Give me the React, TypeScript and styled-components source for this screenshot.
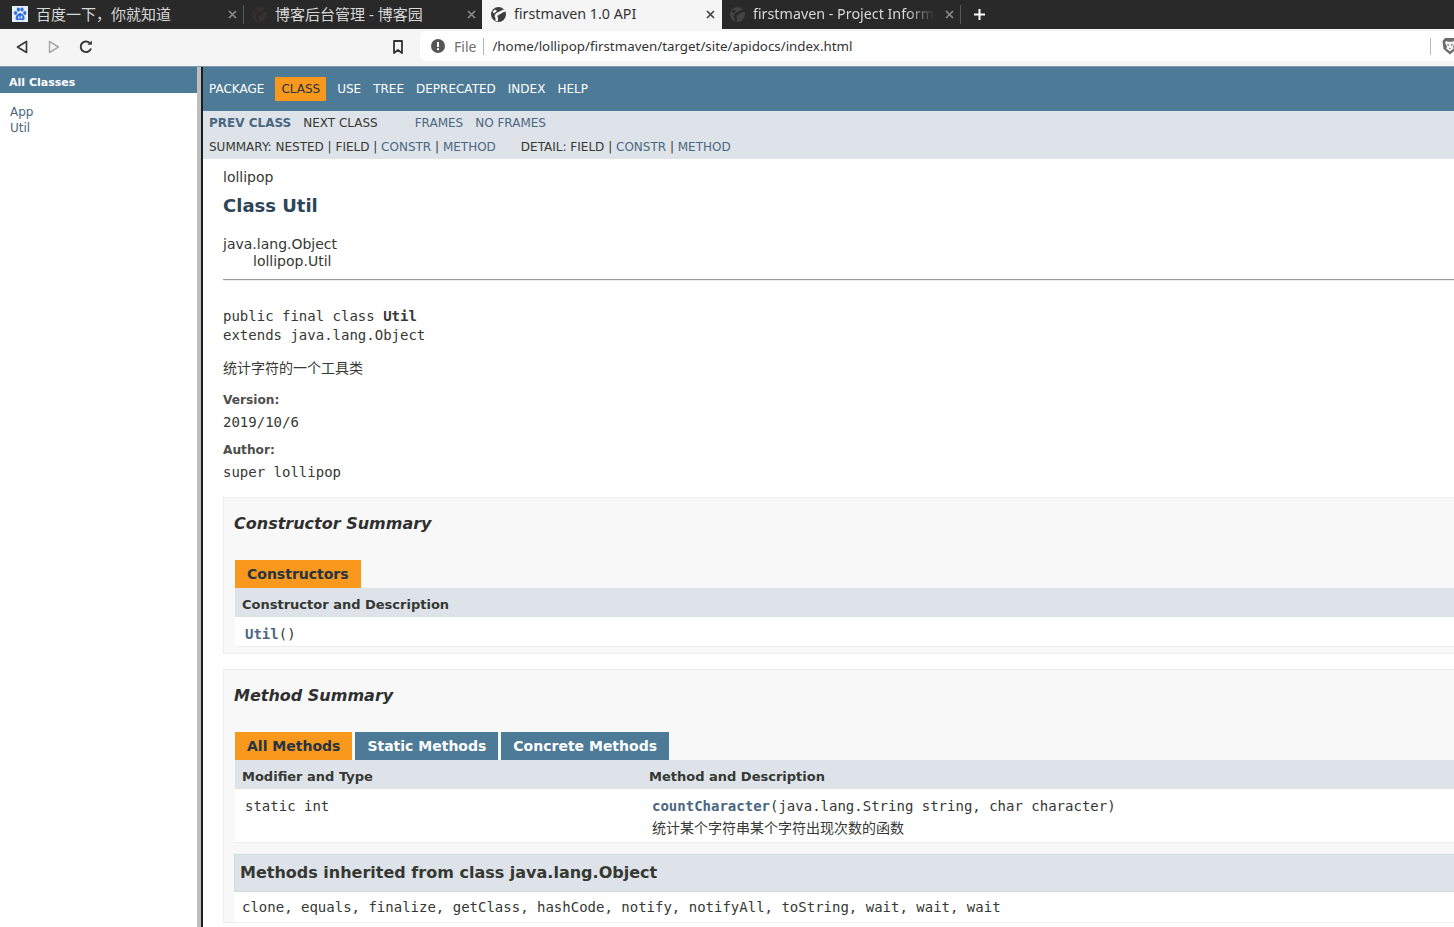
import React from 'react';
import styled, { createGlobalStyle } from 'styled-components';

const GlobalStyle = createGlobalStyle`
    html, body {
        margin: 0;
        padding: 0;
        height: 100%;
        overflow: hidden;
        background: #fff;
    }
    #root {
        height: 100%;
    }
`;

const CJK = `"DejaVu Sans", "Noto Sans CJK SC", sans-serif`;
const MONO = `"DejaVu Sans Mono", "Noto Sans CJK SC", monospace`;
const UI = `"Noto Sans", "Noto Sans CJK SC", sans-serif`;

const Page = styled.div`
    width: 1454px;
    height: 927px;
    overflow: hidden;
    display: flex;
    flex-direction: column;
`;

/* browser chrome */
const TabStrip = styled.div`
    height: 29px;
    flex: none;
    background: #292929;
    display: flex;
    align-items: stretch;
`;

const Tab = styled.div<{ $active?: boolean; $width: number }>`
    width: ${(p) => p.$width}px;
    flex: none;
    box-sizing: border-box;
    display: flex;
    align-items: center;
    padding: 0 ${(p) => (p.$active ? 6 : 5)}px 1px ${(p) => (p.$active ? 9 : 8)}px;
    gap: 8px;
    background: ${(p) => (p.$active ? '#f5f5f6' : 'transparent')};
    color: ${(p) => (p.$active ? '#333' : '#d8d8d8')};
    font: 14.3px ${UI};
`;

const BaiduTab = styled(Tab)`
    padding-left: 12px;
    gap: 8px;
`;

const TabTitle = styled.span<{ $fade?: boolean; $cjk?: boolean }>`
    flex: 1;
    white-space: nowrap;
    overflow: hidden;
    padding-bottom: 2px;
    ${(p) => p.$cjk && 'font-size: 15px; padding-bottom: 1px;'}
    ${(p) =>
        p.$fade &&
        `-webkit-mask-image: linear-gradient(to right, #000 84%, transparent 100%);
         mask-image: linear-gradient(to right, #000 84%, transparent 100%);`}
`;

const TabClose = styled.span<{ $active?: boolean }>`
    width: 12px;
    flex: none;
    display: flex;
    justify-content: center;
    color: ${(p) => (p.$active ? '#444' : '#8a8a8a')};
`;

const TabDivider = styled.div`
    width: 1px;
    flex: none;
    margin: 5px 0;
    background: #5a5a5a;
`;

const NewTab = styled.div`
    width: 36px;
    flex: none;
    display: flex;
    align-items: center;
    justify-content: center;
    padding-bottom: 1px;
    box-sizing: border-box;
`;

const Toolbar = styled.div`
    height: 38px;
    flex: none;
    box-sizing: border-box;
    background: #f5f5f6;
    border-bottom: 1px solid #7f98ab;
    display: flex;
    align-items: center;
    padding: 0 0 3px 14px;
`;

const NavIcons = styled.div`
    display: flex;
    align-items: center;
    gap: 16px;
    width: 378px;
    flex: none;
    margin-top: 2px;
`;

const BookmarkSlot = styled.div`
    width: 28px;
    flex: none;
    display: flex;
    align-items: center;
    margin-top: 2px;
`;

const AddressBar = styled.div`
    flex: 1;
    height: 30px;
    background: #fff;
    border-radius: 6px 0 0 6px;
    display: flex;
    align-items: center;
    padding-left: 11px;
    font: 13.35px ${UI};
    color: #333;
    min-width: 0;
`;

const FileLabel = styled.span`
    color: #6f6f6f;
    font-size: 14px;
    margin-left: 9px;
    padding-right: 7px;
    border-right: 1px solid #b4b4b4;
    line-height: 17px;
`;

const UrlText = styled.span`
    margin-left: 8px;
    flex: 1;
`;

const ShieldSlot = styled.div`
    width: 24px;
    flex: none;
    box-sizing: border-box;
    display: flex;
    align-items: center;
    overflow: hidden;
    padding-left: 11px;
    height: 17px;
    border-left: 1px solid #b9b9b9;
`;

/* frames */
const Frames = styled.div`
    flex: 1;
    min-height: 0;
    display: flex;
    font-family: ${CJK};
    font-size: 14px;
    color: #353833;
`;

const ClassFrame = styled.div`
    width: 197px;
    flex: none;
    background: #fff;
`;

const FrameSplitter = styled.div`
    width: 4px;
    flex: none;
    background: #bfbfbf;
    border-right: 2px solid #1c1c1c;
`;

const ClassHeading = styled.div`
    height: 26px;
    box-sizing: border-box;
    background: #4d7a97;
    color: #fff;
    font-size: 11px;
    font-weight: bold;
    padding: 4px 0 0 9px;
    display: flex;
    align-items: center;
`;

const ClassList = styled.div`
    padding: 12px 0 0 10px;
    display: flex;
    flex-direction: column;
`;

const ClassLink = styled.a`
    color: #4a6782;
    font-size: 12px;
    line-height: 15.5px;
`;

const MainFrame = styled.div`
    flex: 1;
    min-width: 0;
    background: #fff;
`;

const TopNav = styled.div`
    height: 44px;
    background: #4d7a97;
    display: flex;
    align-items: center;
    font-size: 12px;
    color: #fff;
`;

const TopNavItem = styled.span<{ $current?: boolean }>`
    padding: 5px 6px;
    line-height: 14px;
    ${(p) =>
        p.$current &&
        `background: #f8981d;
         color: #253441;
         border-radius: 1px;
         margin: 0 5px 0 5px;`}
`;

const SubNav = styled.div`
    height: 48px;
    background: #dee3e9;
    font-size: 12px;
`;

const SubRow = styled.div`
    height: 24px;
    line-height: 24px;
    padding-left: 6px;
    white-space: pre;
`;

const SubLink = styled.a`
    color: #4a6782;
`;

const PrevClass = styled(SubLink)`
    font-weight: bold;
`;

const NextClass = styled.span`
    margin-left: 12px;
`;

const FramesLink = styled(SubLink)`
    margin-left: 37px;
`;

const NoFramesLink = styled(SubLink)`
    margin-left: 12px;
`;

const DetailLabel = styled.span`
    margin-left: 25px;
`;

const Content = styled.div`
    padding: 0 0 0 20px;
`;

const PackageLabel = styled.div`
    height: 37px;
    line-height: 37px;
`;

const ClassTitle = styled.h2`
    margin: 0;
    font-size: 18px;
    line-height: 20px;
    font-weight: bold;
    color: #2c4557;
    padding-bottom: 20px;
`;

const Tree = styled.div`
    line-height: 17px;
`;

const TreeChild = styled.div`
    padding-left: 30px;
`;

const Rule = styled.hr`
    margin: 9px 0 0 0;
    border: none;
    border-top: 1px solid #9b9b9b;
    border-bottom: 1px solid #efefef;
`;

const Signature = styled.pre`
    margin: 26px 0 0 0;
    font: 14px/19px ${MONO};
`;

const Description = styled.div`
    margin-top: 14px;
    font-size: 14px;
    line-height: 18px;
`;

const Tag = styled.div`
    font-size: 12.2px;
    font-weight: bold;
    line-height: 15px;
    color: #4e4e4e;
`;

const TagValue = styled.div`
    font: 14px/17px ${MONO};
    margin-top: 6px;
`;

const VersionTag = styled(Tag)`
    margin-top: 16px;
`;

const AuthorTag = styled(Tag)`
    margin-top: 12px;
`;

const SummaryBox = styled.div<{ $top: number }>`
    margin-top: ${(p) => p.$top}px;
    box-sizing: border-box;
    background: #f8f8f8;
    border: 1px solid #ededed;
    border-right: none;
    padding: 0 0 0 10px;
`;

const SummaryTitle = styled.h3`
    margin: 0;
    padding-top: 16px;
    height: 62px;
    box-sizing: border-box;
    font-size: 16px;
    line-height: 19px;
    font-style: italic;
    font-weight: bold;
    color: #2f2f2f;
`;

const TabRow = styled.div`
    display: flex;
    gap: 3px;
    height: 28px;
    margin-left: 1px;
`;

const TableTab = styled.div<{ $active?: boolean }>`
    box-sizing: border-box;
    height: 28px;
    padding: 0 12px;
    display: flex;
    align-items: center;
    font-size: 14px;
    font-weight: bold;
    background: ${(p) => (p.$active ? '#f8981d' : '#4d7a97')};
    color: ${(p) => (p.$active ? '#253441' : '#fff')};
`;

const TableHead = styled.div`
    height: 29px;
    box-sizing: border-box;
    margin-left: 1px;
    background: #dee3e9;
    display: flex;
    align-items: center;
    font-size: 13px;
    font-weight: bold;
    padding: 4px 0 0 7px;
    color: #353833;
`;

const HeadFirst = styled.span`
    width: 407px;
    flex: none;
`;

const TableRow = styled.div`
    margin-left: 1px;
    background: #fff;
    border-bottom: 1px solid #eee;
    padding: 8px 0 0 10px;
    font: 14px/18px ${MONO};
    box-sizing: border-box;
`;

const CtorRow = styled(TableRow)`
    height: 30px;
`;

const MethodRow = styled(TableRow)`
    height: 54px;
    display: flex;
`;

const ModifierCell = styled.span`
    width: 407px;
    flex: none;
`;

const MethodCell = styled.div`
    display: flex;
    flex-direction: column;
`;

const MemberLink = styled.a`
    color: #4a6782;
    font-weight: bold;
`;

const MemberNote = styled.span`
    font-family: ${CJK};
    font-size: 14px;
    line-height: 26px;
`;

const BoxEnd = styled.div`
    height: 6px;
`;

const InheritedTitle = styled.h3`
    margin: 11px 0 0 0;
    height: 38px;
    box-sizing: border-box;
    background: #dee3e9;
    border: 1px solid #d0d9e0;
    border-right: none;
    padding: 0 0 2px 5px;
    display: flex;
    align-items: center;
    font-size: 16px;
    font-weight: bold;
    color: #353833;
`;

const InheritedList = styled.div`
    background: #fff;
    height: 30px;
    padding-left: 8px;
    display: flex;
    align-items: center;
    font: 14px ${MONO};
`;

/* drawn icons */
const BaiduIcon = () => (
    <svg width="16" height="16" viewBox="0 0 16 16" style={{ flex: 'none' }}>
        <rect width="16" height="16" fill="#e4effc" />
        <g fill="#2f6fe0">
            <ellipse cx="3.600" cy="7" rx="1.600" ry="2.100" />
            <ellipse cx="6.400" cy="3.600" rx="1.600" ry="2.100" />
            <ellipse cx="10" cy="3.600" rx="1.600" ry="2.100" />
            <ellipse cx="12.800" cy="7" rx="1.600" ry="2.100" />
            <path d="M8.200 7c2 0 3.800 2.600 4.400 4.200.5 1.600-.6 3.200-2.200 3-1-.1-1.600-.4-2.300-.4s-1.400.4-2.400.4c-1.600 0-2.600-1.400-2-3C4.300 9.300 6.200 7 8.200 7z" />
        </g>
        <path d="M6 10.500h1.500v2H6zM8.700 9.800h1.500v2.700H8.700z" fill="#e4effc" />
    </svg>
);

const GlobeIcon = ({ color, hole }: { color: string; hole: string }) => (
    <svg width="15" height="15" viewBox="0 0 15 15" style={{ flex: 'none' }}>
        <circle cx="7.500" cy="7.500" r="7.500" fill={color} />
        <path d="M14 3.500C11 4 9.500 5.500 7.500 6.500 5.500 7.500 4 8.500 5.500 10.500c.5 1 .5 2 0 3.500" fill="none" stroke={hole} strokeWidth="2.600" />
        <path d="M1.500 4.500 4 2.500 6 4 3 6.500z" fill={hole} />
    </svg>
);

const BackIcon = () => (
    <svg width="16" height="16" viewBox="0 0 16 16" fill="none" stroke="#3a3a3a" strokeWidth="1.700" strokeLinejoin="round">
        <path d="M12.500 2.500v11L3.500 8z" />
    </svg>
);

const ForwardIcon = () => (
    <svg width="16" height="16" viewBox="0 0 16 16" fill="none" stroke="#a9a9a9" strokeWidth="1.500" strokeLinejoin="round">
        <path d="M3.500 2.500v11L12.500 8z" />
    </svg>
);

const ReloadIcon = () => (
    <svg width="16" height="16" viewBox="0 0 16 16" fill="none" stroke="#3a3a3a" strokeWidth="2">
        <path d="M13 9.500A5.300 5.300 0 1 1 11.700 4" />
        <path d="M13.800 1.500v4.200H9.600z" fill="#3a3a3a" stroke="none" />
    </svg>
);

const BookmarkIcon = () => (
    <svg width="12" height="14" viewBox="0 0 12 14" fill="none" stroke="#333" strokeWidth="1.800" strokeLinejoin="round">
        <path d="M2 1h8v12L6 10l-4 3z" />
    </svg>
);

const InfoIcon = () => (
    <svg width="14" height="14" viewBox="0 0 14 14" style={{ flex: 'none' }}>
        <circle cx="7" cy="7" r="7" fill="#555" />
        <rect x="6" y="3" width="2" height="5" fill="#fff" />
        <rect x="6" y="9.200" width="2" height="2" fill="#fff" />
    </svg>
);

const PlusIcon = () => (
    <svg width="11" height="11" viewBox="0 0 11 11" stroke="#fff" strokeWidth="2">
        <path d="M5.500 0v11M0 5.500h11" />
    </svg>
);

const CloseIcon = () => (
    <svg width="9" height="9" viewBox="0 0 9 9" stroke="currentColor" strokeWidth="1.700">
        <path d="M1 1l7 7M8 1L1 8" />
    </svg>
);

const BraveIcon = () => (
    <svg width="16" height="18" viewBox="0 0 16 18" style={{ flex: 'none' }}>
        <path d="M3.500 .5h9L15.500 4l-1 8L8 17.500 1.500 12l-1-8z" fill="#6a6a6a" />
        <path d="M4 4l2.500.8h3L12 4l1 2-2 3.500.8 2L8 14.500 4.200 11.500l.8-2L3 6z" fill="#f0f0f0" />
        <path d="M5 7l2 .6v1.200L5.800 8.500zM11 7l-2 .6v1.200l1.200-.3zM7 11h2l-1 1.200z" fill="#6a6a6a" />
    </svg>
);

const App: React.FC = () => {
    return (
        <Page>
            <GlobalStyle />
            <TabStrip>
                <BaiduTab $width={243}>
                    <BaiduIcon />
                    <TabTitle $cjk>百度一下，你就知道</TabTitle>
                    <TabClose>
                        <CloseIcon />
                    </TabClose>
                </BaiduTab>
                <TabDivider />
                <Tab $width={238}>
                    <GlobeIcon color="#352f2f" hole="#292929" />
                    <TabTitle $cjk>博客后台管理 - 博客园</TabTitle>
                    <TabClose>
                        <CloseIcon />
                    </TabClose>
                </Tab>
                <Tab $active $width={240}>
                    <GlobeIcon color="#3d3d3d" hole="#f5f5f6" />
                    <TabTitle>firstmaven 1.0 API</TabTitle>
                    <TabClose $active>
                        <CloseIcon />
                    </TabClose>
                </Tab>
                <Tab $width={238}>
                    <GlobeIcon color="#444" hole="#292929" />
                    <TabTitle $fade>firstmaven - Project Inform</TabTitle>
                    <TabClose>
                        <CloseIcon />
                    </TabClose>
                </Tab>
                <TabDivider />
                <NewTab>
                    <PlusIcon />
                </NewTab>
            </TabStrip>
            <Toolbar>
                <NavIcons>
                    <BackIcon />
                    <ForwardIcon />
                    <ReloadIcon />
                </NavIcons>
                <BookmarkSlot>
                    <BookmarkIcon />
                </BookmarkSlot>
                <AddressBar>
                    <InfoIcon />
                    <FileLabel>File</FileLabel>
                    <UrlText>/home/lollipop/firstmaven/target/site/apidocs/index.html</UrlText>
                    <ShieldSlot>
                        <BraveIcon />
                    </ShieldSlot>
                </AddressBar>
            </Toolbar>
            <Frames>
                <ClassFrame>
                    <ClassHeading>All Classes</ClassHeading>
                    <ClassList>
                        <ClassLink>App</ClassLink>
                        <ClassLink>Util</ClassLink>
                    </ClassList>
                </ClassFrame>
                <FrameSplitter />
                <MainFrame>
                    <TopNav>
                        <TopNavItem>PACKAGE</TopNavItem>
                        <TopNavItem $current>CLASS</TopNavItem>
                        <TopNavItem>USE</TopNavItem>
                        <TopNavItem>TREE</TopNavItem>
                        <TopNavItem>DEPRECATED</TopNavItem>
                        <TopNavItem>INDEX</TopNavItem>
                        <TopNavItem>HELP</TopNavItem>
                    </TopNav>
                    <SubNav>
                        <SubRow>
                            <PrevClass>PREV CLASS</PrevClass>
                            <NextClass>NEXT CLASS</NextClass>
                            <FramesLink>FRAMES</FramesLink>
                            <NoFramesLink>NO FRAMES</NoFramesLink>
                        </SubRow>
                        <SubRow>
                            {'SUMMARY: NESTED | FIELD | '}
                            <SubLink>CONSTR</SubLink>
                            {' | '}
                            <SubLink>METHOD</SubLink>
                            <DetailLabel>{'DETAIL: FIELD | '}</DetailLabel>
                            <SubLink>CONSTR</SubLink>
                            {' | '}
                            <SubLink>METHOD</SubLink>
                        </SubRow>
                    </SubNav>
                    <Content>
                        <PackageLabel>lollipop</PackageLabel>
                        <ClassTitle>Class Util</ClassTitle>
                        <Tree>
                            <div>java.lang.Object</div>
                            <TreeChild>lollipop.Util</TreeChild>
                        </Tree>
                        <Rule />
                        <Signature>
                            public final class <b>Util</b>
                            {'\n'}extends java.lang.Object
                        </Signature>
                        <Description>统计字符的一个工具类</Description>
                        <VersionTag>Version:</VersionTag>
                        <TagValue>2019/10/6</TagValue>
                        <AuthorTag>Author:</AuthorTag>
                        <TagValue>super lollipop</TagValue>
                        <SummaryBox $top={16}>
                            <SummaryTitle>Constructor Summary</SummaryTitle>
                            <TabRow>
                                <TableTab $active>Constructors</TableTab>
                            </TabRow>
                            <TableHead>Constructor and Description</TableHead>
                            <CtorRow>
                                <MemberLink>Util</MemberLink>()
                            </CtorRow>
                            <BoxEnd />
                        </SummaryBox>
                        <SummaryBox $top={15}>
                            <SummaryTitle>Method Summary</SummaryTitle>
                            <TabRow>
                                <TableTab $active>All Methods</TableTab>
                                <TableTab>Static Methods</TableTab>
                                <TableTab>Concrete Methods</TableTab>
                            </TabRow>
                            <TableHead>
                                <HeadFirst>Modifier and Type</HeadFirst>
                                Method and Description
                            </TableHead>
                            <MethodRow>
                                <ModifierCell>static int</ModifierCell>
                                <MethodCell>
                                    <span>
                                        <MemberLink>countCharacter</MemberLink>
                                        (java.lang.String string, char character)
                                    </span>
                                    <MemberNote>统计某个字符串某个字符出现次数的函数</MemberNote>
                                </MethodCell>
                            </MethodRow>
                            <InheritedTitle>Methods inherited from class java.lang.Object</InheritedTitle>
                            <InheritedList>
                                clone, equals, finalize, getClass, hashCode, notify, notifyAll, toString, wait, wait, wait
                            </InheritedList>
                        </SummaryBox>
                    </Content>
                </MainFrame>
            </Frames>
        </Page>
    );
};

export default App;
